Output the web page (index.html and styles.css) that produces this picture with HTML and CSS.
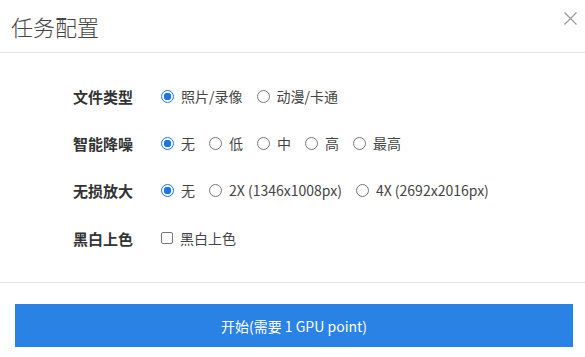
FILE: index.html
```html
<!DOCTYPE html>
<html lang="zh-CN">
<head>
    <meta charset="UTF-8">
    <meta name="viewport" content="width=device-width, initial-scale=1.0">
    <title>任务配置</title>
    <link rel="stylesheet" href="styles.css">
</head>
<body>
    <div class="modal">
        <div class="modal-header">
            <h1>任务配置</h1>
            <svg class="close" width="13" height="13" viewBox="0 0 13 13">
                <path d="M0.5 0.5 L12.5 12.5 M12.5 0.5 L0.5 12.5" stroke="#9a9a9a" stroke-width="1.2" fill="none"/>
            </svg>
        </div>

        <div class="modal-body">
            <div class="row">
                <div class="label">文件类型</div>
                <label class="opt"><input type="radio" name="type" checked>照片/录像</label>
                <label class="opt"><input type="radio" name="type">动漫/卡通</label>
            </div>
            <div class="row">
                <div class="label">智能降噪</div>
                <label class="opt"><input type="radio" name="noise" checked>无</label>
                <label class="opt"><input type="radio" name="noise">低</label>
                <label class="opt"><input type="radio" name="noise">中</label>
                <label class="opt"><input type="radio" name="noise">高</label>
                <label class="opt"><input type="radio" name="noise">最高</label>
            </div>
            <div class="row">
                <div class="label">无损放大</div>
                <label class="opt"><input type="radio" name="scale" checked>无</label>
                <label class="opt"><input type="radio" name="scale">2X (1346x1008px)</label>
                <label class="opt"><input type="radio" name="scale">4X (2692x2016px)</label>
            </div>
            <div class="row">
                <div class="label">黑白上色</div>
                <label class="opt"><input type="checkbox" name="color">黑白上色</label>
            </div>
        </div>

        <div class="modal-footer">
            <button class="start">开始(需要 1 GPU point)</button>
        </div>
    </div>
</body>
</html>
```

FILE: styles.css
```css
body {
    margin: 0;
    background: #fff;
    color: #333;
    font-family: "Noto Sans CJK SC", "Noto Sans", sans-serif;
    font-size: 14px;
}
.modal {
    width: 585px;
}
.modal-header {
    display: flex;
    justify-content: space-between;
    align-items: center;
    height: 52px;
    padding: 0 8px 0 11px;
    border-bottom: 1px solid #e5e5e5;
}
.modal-header h1 {
    margin: 0;
    font-size: 22px;
    font-weight: 200;
    color: #444;
}
.close {
    margin-top: -16px;
    margin-right: 0;
}
.modal-body {
    padding: 33px 0 34px 73px;
    display: flex;
    flex-direction: column;
    gap: 27px;
}
.row {
    display: flex;
    align-items: center;
    height: 20px;
}
.row:last-child {
    margin-top: 1px;
}
.label {
    width: 88px;
    font-size: 15px;
    font-weight: 700;
    color: #333;
}
.opt {
    display: flex;
    align-items: center;
    margin-right: 14px;
    color: #444;
    white-space: nowrap;
}
.opt input {
    appearance: none;
    width: 13px;
    height: 13px;
    margin: 0 7px 0 0;
    border: 1px solid #777;
    border-radius: 50%;
    background: #fff;
}
.opt input:checked {
    border-color: #1a73f0;
    background: radial-gradient(circle, #1a73f0 0 3.5px, #fff 4px);
}
.opt input[type="checkbox"] {
    border-radius: 2px;
    width: 12px;
    height: 12px;
}
.modal-footer {
    border-top: 1px solid #e5e5e5;
    padding: 21px 12px 10px 15px;
}
.start {
    display: block;
    width: 100%;
    height: 43px;
    border: 0;
    background: #2a82e4;
    color: #fff;
    font-family: inherit;
    font-size: 14px;
}
```
